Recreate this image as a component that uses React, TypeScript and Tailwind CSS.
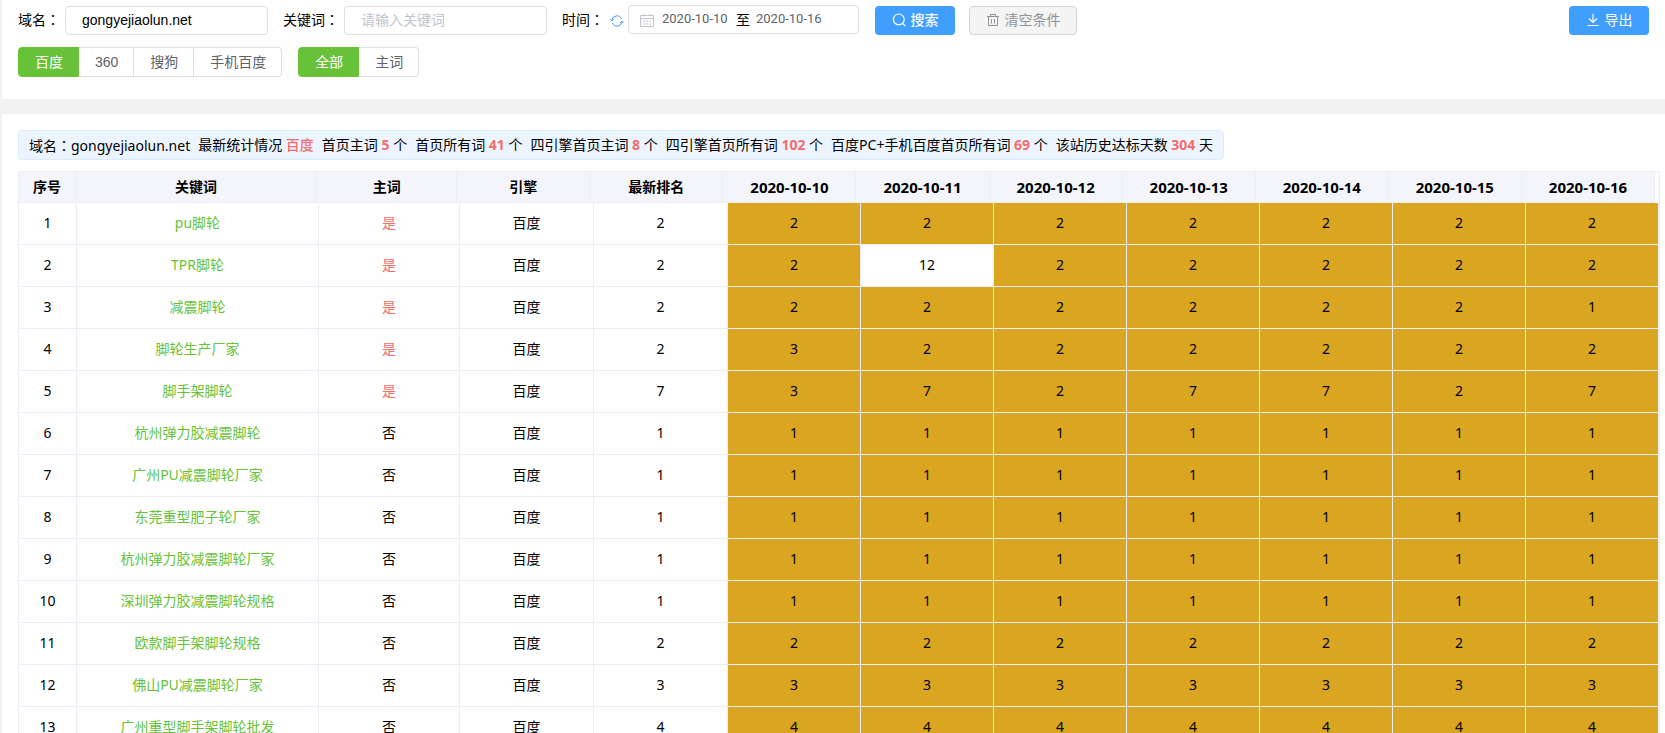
import { useState } from "react";
import clsx from "clsx";

type Row = {
  word: string;
  main: boolean;
  rank: number;
  days: number[];
};

const dates = [
  "2020-10-10",
  "2020-10-11",
  "2020-10-12",
  "2020-10-13",
  "2020-10-14",
  "2020-10-15",
  "2020-10-16",
];

const same = (n: number) => dates.map(() => n);

const rows: Row[] = [
  { word: "pu脚轮", main: true, rank: 2, days: same(2) },
  { word: "TPR脚轮", main: true, rank: 2, days: [2, 12, 2, 2, 2, 2, 2] },
  { word: "减震脚轮", main: true, rank: 2, days: [2, 2, 2, 2, 2, 2, 1] },
  { word: "脚轮生产厂家", main: true, rank: 2, days: [3, 2, 2, 2, 2, 2, 2] },
  { word: "脚手架脚轮", main: true, rank: 7, days: [3, 7, 2, 7, 7, 2, 7] },
  { word: "杭州弹力胶减震脚轮", main: false, rank: 1, days: same(1) },
  { word: "广州PU减震脚轮厂家", main: false, rank: 1, days: same(1) },
  { word: "东莞重型肥子轮厂家", main: false, rank: 1, days: same(1) },
  { word: "杭州弹力胶减震脚轮厂家", main: false, rank: 1, days: same(1) },
  { word: "深圳弹力胶减震脚轮规格", main: false, rank: 1, days: same(1) },
  { word: "欧款脚手架脚轮规格", main: false, rank: 2, days: same(2) },
  { word: "佛山PU减震脚轮厂家", main: false, rank: 3, days: same(3) },
  { word: "广州重型脚手架脚轮批发", main: false, rank: 4, days: same(4) },
];

const stats = [
  { label: "首页主词", value: 5, unit: "个" },
  { label: "首页所有词", value: 41, unit: "个" },
  { label: "四引擎首页主词", value: 8, unit: "个" },
  { label: "四引擎首页所有词", value: 102, unit: "个" },
  { label: "百度PC+手机百度首页所有词", value: 69, unit: "个" },
  { label: "该站历史达标天数", value: 304, unit: "天" },
];

function RefreshIcon() {
  return (
    <svg width="14" height="14" viewBox="0 0 14 14" fill="none" stroke="#409eff" strokeWidth="1">
      <path d="M2 6.2A5 5 0 0 1 11.6 5M12 7.8A5 5 0 0 1 2.4 9" />
      <path d="M.4 5 2 6.8 3.8 5.2M13.6 9 12 7.2 10.2 8.8" />
    </svg>
  );
}

function CalendarIcon() {
  return (
    <svg width="14" height="14" viewBox="0 0 14 14" fill="none" stroke="#c0c4cc">
      <path d="M.5 2.5h13v11H.5zM.5 5.5h13M4 .5v3M10 .5v3" />
      <path d="M3 8h2M6 8h2M9 8h2M3 11h2M6 11h2M9 11h2" />
    </svg>
  );
}

function SearchIcon() {
  return (
    <svg width="14" height="14" viewBox="0 0 14 14" fill="none" stroke="currentColor" strokeWidth="1.2">
      <circle cx="6.8" cy="6.4" r="5.4" />
      <path d="m10.6 10.4 2.6 2.6" />
    </svg>
  );
}

function TrashIcon() {
  return (
    <svg width="14" height="14" viewBox="0 0 14 14" fill="none" stroke="currentColor">
      <path d="M1 3.5h12M4.5 3.5v-2h5v2M2.5 3.5v9h9v-9M5.500 6v4.500M8.500 6v4.500" />
    </svg>
  );
}

function DownloadIcon() {
  return (
    <svg width="14" height="14" viewBox="0 0 14 14" fill="none" stroke="currentColor" strokeWidth="1.2">
      <path d="M7 1v8M3 5.500l4 4 4-4M1.500 12.500h11" />
    </svg>
  );
}

// full-width colon, centred in its cell
function Colon() {
  return <span className="font-['Noto_Sans_CJK_TC',sans-serif]">：</span>;
}

type GroupProps = {
  name: string;
  options: string[];
  value: string;
  onChange: (v: string) => void;
};

function RadioGroup({ name, options, value, onChange }: GroupProps) {
  return (
    <div className="flex h-[30px]">
      {options.map((o, i) => (
        <label
          key={o}
          className={clsx(
            "flex cursor-pointer items-center border-y border-r pr-[15px] pl-4",
            i === 0 && "rounded-l border-l",
            i === options.length - 1 && "rounded-r",
            o === value
              ? "border-[#67c23a] bg-[#67c23a] text-white"
              : "border-[#dcdfe6] bg-white text-[#606266]"
          )}
        >
          <input
            type="radio"
            name={name}
            className="sr-only"
            checked={o === value}
            onChange={() => onChange(o)}
          />
          {o}
        </label>
      ))}
    </div>
  );
}

export default function App() {
  const [domain, setDomain] = useState("gongyejiaolun.net");
  const [keyword, setKeyword] = useState("");
  const [start, setStart] = useState("2020-10-10");
  const [end, setEnd] = useState("2020-10-16");
  const [engine, setEngine] = useState("百度");
  const [kind, setKind] = useState("全部");

  const clear = () => {
    setDomain("");
    setKeyword("");
  };

  return (
    <div className="min-h-screen bg-[#f1f1f1] pl-[2px] text-sm text-black">
      <section className="bg-[#fefefe] px-4 pt-[6px] pb-[22px] font-['Liberation_Sans','Noto_Sans_CJK_SC',sans-serif]">
        <div className="flex h-[29px] items-center">
          <label htmlFor="domain" className="w-[47px] pb-[2px] whitespace-nowrap">域名<Colon /></label>
          <input
            id="domain"
            className="h-[29px] w-[203px] rounded border border-[#dcdfe6] bg-white px-4 pb-px outline-none"
            value={domain}
            onChange={(e) => setDomain(e.target.value)}
          />
          <label htmlFor="keyword" className="ml-[15px] w-[61px] pb-[2px] whitespace-nowrap">关键词<Colon /></label>
          <input
            id="keyword"
            className="h-[29px] w-[203px] rounded border border-[#dcdfe6] bg-white px-4 pb-px outline-none placeholder:text-[#c0c4cc]"
            placeholder="请输入关键词"
            value={keyword}
            onChange={(e) => setKeyword(e.target.value)}
          />
          <label htmlFor="start" className="ml-[15px] w-12 pb-[2px] whitespace-nowrap">时间<Colon /></label>
          <button type="button" aria-label="刷新">
            <RefreshIcon />
          </button>
          <div className="mb-[2px] ml-1 flex h-[29px] w-[231px] items-center rounded border border-[#dcdfe6] bg-white pl-[11px] text-[13px] text-[#606266]">
            <CalendarIcon />
            <input
              id="start"
              className="ml-2 w-[68px] font-[Roboto,sans-serif] outline-none"
              value={start}
              onChange={(e) => setStart(e.target.value)}
            />
            <span className="mx-[6px] text-sm text-black">至</span>
            <input
              aria-label="结束日期"
              className="w-[68px] font-[Roboto,sans-serif] outline-none"
              value={end}
              onChange={(e) => setEnd(e.target.value)}
            />
          </div>
          <button type="button" className="ml-4 flex h-[29px] w-20 items-center justify-center gap-[5px] rounded bg-[#409eff] pb-[2px] font-medium text-white">
            <SearchIcon />
            搜索
          </button>
          <button
            type="button"
            onClick={clear}
            className="ml-[14px] flex h-[29px] w-[108px] items-center justify-center gap-[5px] rounded border border-[#d3d4d6] bg-[#f4f4f5] pb-[2px] text-[#909399]"
          >
            <TrashIcon />
            清空条件
          </button>
          <button type="button" className="ml-auto flex h-[29px] w-20 items-center justify-center gap-[5px] rounded bg-[#409eff] pb-[2px] text-white">
            <DownloadIcon />
            导出
          </button>
        </div>
        <div className="mt-3 flex gap-4">
          <RadioGroup name="engine" options={["百度", "360", "搜狗", "手机百度"]} value={engine} onChange={setEngine} />
          <RadioGroup name="kind" options={["全部", "主词"]} value={kind} onChange={setKind} />
        </div>
      </section>

      <section className="mt-[15px] bg-[#fefefe] pt-4 pr-[5px] pl-4 font-['Noto_Sans','Noto_Sans_CJK_SC',sans-serif]">
        <div className="flex h-[30px] w-fit items-center gap-2 rounded border border-[#d9ecff] bg-[#ecf5ff] px-[10px] leading-5 whitespace-nowrap">
          <span>域名<Colon />gongyejiaolun.net</span>
          <span>
            最新统计情况 <span className="font-medium text-[#f56c6c]">百度</span>
          </span>
          {stats.map((s) => (
            <span key={s.label}>
              {s.label} <b className="text-[#f56c6c]">{s.value}</b> {s.unit}
            </span>
          ))}
        </div>

        <div className="mt-[11px] border border-[#ebeef5] text-center leading-5">
          <div className="pr-1">
            <table className="w-full table-fixed border-separate border-spacing-0">
              <colgroup>
                <col className="w-[57px]" />
                <col className="w-[241px]" />
                <col className="w-[140px]" />
                <col className="w-[133px]" />
                <col className="w-[133px]" />
                {dates.map((d) => (
                  <col key={d} className="w-[133px]" />
                ))}
              </colgroup>
              <thead>
                <tr className="h-[31px] bg-[#f3f5fa]">
                  {["序号", "关键词", "主词", "引擎", "最新排名"].map((h) => (
                    <th key={h} className="border-r border-b border-[#ebeef5] p-0">{h}</th>
                  ))}
                  {dates.map((d) => (
                    <th key={d} className="border-r border-b border-[#ebeef5] p-0 text-[15px]">{d}</th>
                  ))}
                </tr>
              </thead>
            </table>
          </div>
          <table className="w-full table-fixed border-separate border-spacing-0">
            <colgroup>
              <col className="w-[58px]" />
              <col className="w-[242px]" />
              <col className="w-[141px]" />
              <col className="w-[134px]" />
              <col className="w-[134px]" />
              {dates.map((d) => (
                <col key={d} className="w-[133px]" />
              ))}
            </colgroup>
            <tbody>
              {rows.map((r, i) => (
                <tr key={r.word} className="h-[42px]">
                  <td className="border-r border-b border-[#ebeef5] p-0 pb-[2px]">{i + 1}</td>
                  <td className="border-r border-b border-[#ebeef5] p-0 pb-[2px]">
                    <a href="#" className="text-[#67c23a]">{r.word}</a>
                  </td>
                  <td className={clsx("border-r border-b border-[#ebeef5] p-0 pb-[2px]", r.main && "text-[#f56c6c]")}>
                    {r.main ? "是" : "否"}
                  </td>
                  <td className="border-r border-b border-[#ebeef5] p-0 pb-[2px]">百度</td>
                  <td className="border-r border-b border-[#ebeef5] p-0 pb-[2px]">{r.rank}</td>
                  {r.days.map((n, j) => (
                    <td
                      key={dates[j]}
                      className={clsx("border-r border-b border-[#ebeef5] p-0 pb-[2px]", n <= 10 && "bg-[#daa520]")}
                    >
                      {n}
                    </td>
                  ))}
                </tr>
              ))}
            </tbody>
          </table>
        </div>
      </section>
    </div>
  );
}
